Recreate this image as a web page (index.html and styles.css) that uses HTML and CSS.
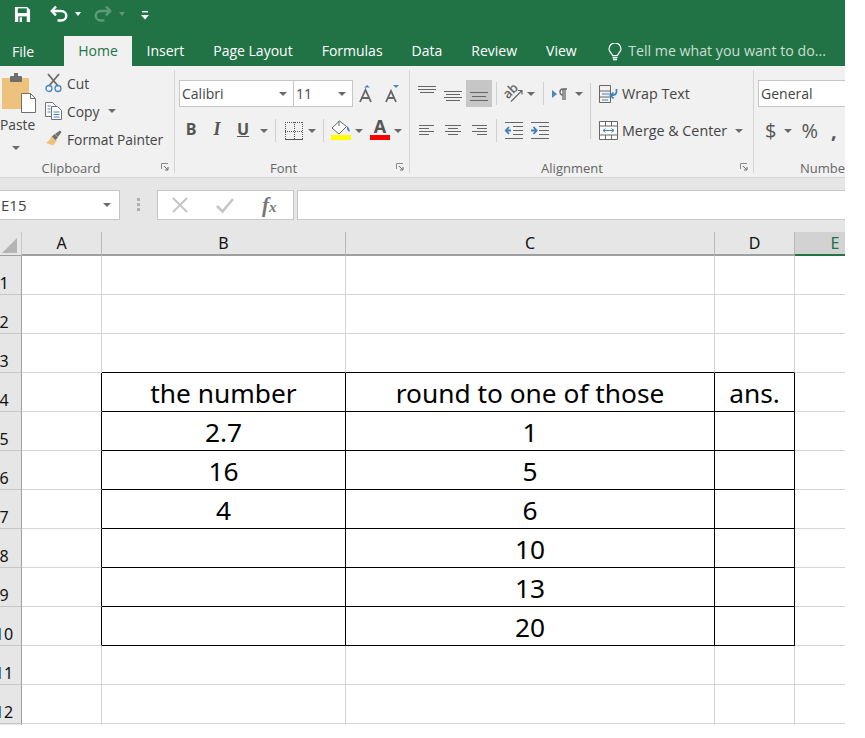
FILE: index.html
```html
<!DOCTYPE html>
<html lang="en">
<head>
<meta charset="utf-8">
<title>Excel</title>
<link rel="stylesheet" href="styles.css">
</head>
<body>
<div class="app">
  <header class="titlebar">
    <svg class="qa-save" width="17" height="17" viewBox="0 0 18 18"><path d="M1 1h13l3 3v13H1z" fill="#fff"/><rect x="4" y="2.5" width="9.500" height="5" fill="#217346"/><rect x="4.500" y="11" width="9" height="6" fill="#217346"/><rect x="6" y="12" width="2.500" height="5" fill="#fff"/></svg>
    <svg class="qa-undo" width="20" height="18" viewBox="0 0 20 18"><path d="M6 1.500 1.800 6 6 10.300" fill="none" stroke="#fff" stroke-width="2.400"/><path d="M2.500 6H11c7 0 7 9.500 0 9.500H7.500" fill="none" stroke="#fff" stroke-width="2.400"/></svg>
    <span class="qa-arrow"></span>
    <svg class="qa-redo" width="20" height="18" viewBox="0 0 20 18"><path d="M14 1.500 18.200 6 14 10.300" fill="none" stroke="#5c9a78" stroke-width="2.400"/><path d="M17.500 6H9c-7 0-7 9.500 0 9.500h3.500" fill="none" stroke="#5c9a78" stroke-width="2.400"/></svg>
    <span class="qa-arrow dim"></span>
    <svg class="qa-more" width="8" height="9" viewBox="0 0 8 9"><rect x="1" y="0" width="6" height="1.400" fill="#fff"/><path d="M0 4h8L4 8.500z" fill="#fff"/></svg>
  </header>

  <nav class="tabs">
    <span class="tab tab-file">File</span>
    <span class="tab tab-home">Home</span>
    <span class="tab">Insert</span>
    <span class="tab">Page Layout</span>
    <span class="tab">Formulas</span>
    <span class="tab">Data</span>
    <span class="tab">Review</span>
    <span class="tab">View</span>
    <span class="tell">
      <svg width="16" height="18" viewBox="0 0 16 18"><path d="M5.500 12.500C5 10 2 9 2 6a6 6 0 0 1 12 0c0 3-3 4-3.500 6.500z" fill="none" stroke="#fff" stroke-width="1.200"/><path d="M5.500 14.500h5M6 16.500h4" stroke="#fff" stroke-width="1.400"/></svg>
      <span class="tell-text">Tell me what you want to do...</span>
    </span>
  </nav>

  <section class="ribbon">
    <div class="group g-clip">
      <div class="clip-body">
        <div class="paste">
          <svg class="paste-icon" width="37" height="41" viewBox="0 0 37 41"><path d="M2 6h27v31H2z" fill="#edc27c"/><rect x="10" y="4" width="12" height="6" rx="1" fill="#6e6e6e"/><rect x="14" y="1" width="4" height="4" fill="#6e6e6e"/><path d="M21.500 21.500h9l5 5v14h-14z" fill="#fff" stroke="#6e6e6e"/><path d="M30.500 21.500v5h5" fill="none" stroke="#6e6e6e"/></svg>
          <span class="paste-label">Paste</span>
          <span class="arrow"></span>
        </div>
        <div class="clip-list">
          <div class="clip-row">
            <svg width="18" height="20" viewBox="0 0 18 20"><path d="M3 1l10 12M14 1 4 13" stroke="#6b6b6b" stroke-width="1.800" fill="none"/><circle cx="4" cy="15.500" r="3" fill="none" stroke="#4a85c0" stroke-width="1.300"/><circle cx="13" cy="15.500" r="3" fill="none" stroke="#4a85c0" stroke-width="1.300"/></svg>
            <span>Cut</span>
          </div>
          <div class="clip-row">
            <svg width="18" height="20" viewBox="0 0 18 20"><path d="M.5 1.500h7l3 3v11H.5z" fill="#fff" stroke="#707070"/><path d="M6.500 5.500h6l4 4v9h-10z" fill="#fff" stroke="#707070"/><path d="M2.500 5h3M2.500 8h3M2.500 11h3M8.500 11h6M8.500 13.500h6M8.500 16h6" stroke="#4a85c0"/></svg>
            <span>Copy</span>
            <span class="arrow copy-arrow"></span>
          </div>
          <div class="clip-row">
            <svg width="18" height="20" viewBox="0 0 18 20"><path d="M7 6.500 12 11.500 8 16.500 1 14 4.500 11z" fill="#edc27c"/><path d="M7 7.500l2.500-2.500 3.500 3.500-2.500 2.500z" fill="#6e6e6e"/><path d="M10 5l5-3.500 1.500 1.500-3.500 5z" fill="#6e6e6e"/></svg>
            <span>Format Painter</span>
          </div>
        </div>
      </div>
      <div class="group-label">Clipboard<svg class="launch" width="8" height="8" viewBox="0 0 8 8"><path d="M.5 6V.5H7" fill="none" stroke="#8a8a8a"/><path d="M3 3l4 4M7 4v3H4" fill="none" stroke="#6a6a6a"/></svg></div>
    </div>

    <div class="group g-font">
      <div class="rows">
        <div class="row r-font1">
          <div class="combo c-name"><span class="combo-text">Calibri</span><span class="arrow"></span></div>
          <div class="combo c-size"><span class="combo-text">11</span><span class="arrow"></span></div>
          <span class="btn w26"><svg width="20" height="20" viewBox="0 0 20 20"><path d="M3 18 8.500 6 14 18M5 14h7" fill="none" stroke="#666" stroke-width="1.800"/><path d="M7 3.500 10 1l3 2.500z" fill="#4a85c0"/></svg></span>
          <span class="btn w26"><svg width="20" height="20" viewBox="0 0 20 20"><path d="M3 18 8 7l5 11M4.700 14h7" fill="none" stroke="#666" stroke-width="1.800"/><path d="M10 1h6l-3 3z" fill="#4a85c0"/></svg></span>
        </div>
        <div class="row r-font2">
          <span class="btn w26 t-b">B</span>
          <span class="btn w26 t-i">I</span>
          <span class="btn w26 t-u">U</span>
          <span class="btn w16"><span class="arrow"></span></span>
          <span class="sep s-a"></span>
          <span class="btn w20"><svg width="18" height="18" viewBox="0 0 18 18"><path d="M.5 0v18M9.500 0v18M17.500 0v18M0 .5h18M0 9.500h18" fill="none" stroke="#555" stroke-dasharray="1 1"/><path d="M0 17.500h18" stroke="#555"/></svg></span>
          <span class="btn w16"><span class="arrow"></span></span>
          <span class="sep s-b"></span>
          <span class="btn w20 stacked"><svg width="20" height="15" viewBox="0 0 20 15"><path d="M8.500 1 1 8l7 6 7.500-7.500z" fill="#fff" stroke="#666"/><path d="M8 1v5" stroke="#666"/><path d="M16 6c2 2 3 4 2.500 6-2-1-3-3-2.500-6z" fill="#3f7fbf"/></svg><span class="swatch yellow"></span></span>
          <span class="btn w16"><span class="arrow"></span></span>
          <span class="btn w20 stacked col-a"><span class="t-a">A</span><span class="swatch red"></span></span>
          <span class="btn w16"><span class="arrow"></span></span>
        </div>
      </div>
      <div class="group-label">Font<svg class="launch" width="8" height="8" viewBox="0 0 8 8"><path d="M.5 6V.5H7" fill="none" stroke="#8a8a8a"/><path d="M3 3l4 4M7 4v3H4" fill="none" stroke="#6a6a6a"/></svg></div>
    </div>

    <div class="group g-align">
      <div class="rows">
        <div class="row r-al">
          <span class="btn w26"><svg width="18" height="18" viewBox="0 0 18 18"><path d="M0 1.500h18M0 4.500h18M2 7.500h14" stroke="#666"/></svg></span>
          <span class="btn w26"><svg width="18" height="18" viewBox="0 0 18 18"><path d="M0 6.500h18M2 9.500h14M0 12.500h18M2 15.500h14" stroke="#666"/></svg></span>
          <span class="btn w26 active"><svg width="18" height="18" viewBox="0 0 18 18"><path d="M0 7.500h18M2 11.500h14M0 15.500h18" stroke="#666"/></svg></span>
          <span class="sep s-c"></span>
          <span class="btn w20"><svg width="20" height="20" viewBox="0 0 20 20"><text class="ab" x="8" y="11" text-anchor="middle" transform="rotate(-45 8 7.500)">ab</text><path d="M8 17.500 18.500 7M15 6.500h4v4" fill="none" stroke="#666" stroke-width="1.200"/></svg></span>
          <span class="btn w16"><span class="arrow"></span></span>
          <span class="sep s-c"></span>
          <span class="btn w20"><svg width="20" height="14" viewBox="0 0 20 14"><path d="M2 3l5 4-5 4z" fill="#4a85c0"/><path d="M13 13V2h4M15 13V2M13 2c-4 0-4 6 0 6" fill="none" stroke="#666" stroke-width="1.300"/></svg></span>
          <span class="btn w16 a-rtl"><span class="arrow"></span></span>
          <span class="sep s-tall"></span>
          <span class="big-ico"><svg width="20" height="20" viewBox="0 0 20 20"><path d="M.5 1.500h11v17H.5zM.5 7h11M.5 13h11" fill="none" stroke="#666"/><path d="M3 10h8M3 16h6" stroke="#4a85c0"/><path d="M17.500 5v2.500c0 3-2 4-6 4M14.500 8.500l-3 3 3 3" fill="none" stroke="#3f7fbf" stroke-width="1.700"/></svg></span>
          <span class="lbl">Wrap Text</span>
        </div>
        <div class="row r-al r-al2">
          <span class="btn w26"><svg width="16" height="14" viewBox="0 0 16 14"><path d="M0 1.500h15M0 4.500h10M0 7.500h15M0 10.500h10" stroke="#666"/></svg></span>
          <span class="btn w26"><svg width="16" height="14" viewBox="0 0 16 14"><path d="M0 1.500h16M3 4.500h10M0 7.500h16M3 10.500h10" stroke="#666"/></svg></span>
          <span class="btn w26"><svg width="16" height="14" viewBox="0 0 16 14"><path d="M1 1.500h15M6 4.500h10M1 7.500h15M6 10.500h10" stroke="#666"/></svg></span>
          <span class="sep s-c s-d"></span>
          <span class="btn w26"><svg width="18" height="17" viewBox="0 0 18 17"><path d="M0 .500h18M8 4.500h10M8 8.500h10M8 12.500h10M0 16.500h18" stroke="#666"/><path d="M6 8.500H1M4 5 .8 8.500 4 12" fill="none" stroke="#3f7fbf" stroke-width="1.800"/></svg></span>
          <span class="btn w26"><svg width="18" height="17" viewBox="0 0 18 17"><path d="M0 .500h18M8 4.500h10M8 8.500h10M8 12.500h10M0 16.500h18" stroke="#666"/><path d="M0 8.500h5M2.500 5l3.200 3.500L2.500 12" fill="none" stroke="#3f7fbf" stroke-width="1.800"/></svg></span>
          <span class="big-ico merge-ico"><svg width="20" height="19" viewBox="0 0 20 19"><path d="M.5.500h18v18H.5z" fill="#fff" stroke="#666"/><path d="M.5 5h18M.5 14h18M6.500.500V5M12.500.500V5M6.500 14v4.500M12.500 14v4.500" fill="none" stroke="#666"/><path d="M4 9.500h11M6.500 7.500l-2.500 2 2.500 2M12.500 7.500l2.500 2-2.500 2" fill="none" stroke="#3f7fbf"/></svg></span>
          <span class="lbl lbl-merge">Merge &amp; Center</span>
          <span class="arrow merge-arrow"></span>
        </div>
      </div>
      <div class="group-label">Alignment<svg class="launch" width="8" height="8" viewBox="0 0 8 8"><path d="M.5 6V.5H7" fill="none" stroke="#8a8a8a"/><path d="M3 3l4 4M7 4v3H4" fill="none" stroke="#6a6a6a"/></svg></div>
    </div>

    <div class="group g-num">
      <div class="rows">
        <div class="row r-num1">
          <div class="combo c-gen"><span class="combo-text">General</span></div>
        </div>
        <div class="row r-num2">
          <span class="sym s-dollar">$</span>
          <span class="btn w16"><span class="arrow"></span></span>
          <span class="sym s-pct">%</span>
          <span class="sym s-comma">,</span>
        </div>
      </div>
      <div class="group-label label-num">Number</div>
    </div>
  </section>

  <section class="fbar">
    <div class="namebox"><span class="nb-text">E15</span><span class="arrow"></span></div>
    <div class="grip"><i></i><i></i><i></i></div>
    <div class="fx-btns">
      <svg width="18" height="18" viewBox="0 0 18 18"><path d="M2 2l14 14M16 2 2 16" stroke="#c6c6c6" stroke-width="2"/></svg>
      <svg width="18" height="18" viewBox="0 0 18 18"><path d="M1 10l5.500 5.500L17 3" fill="none" stroke="#c6c6c6" stroke-width="2.600"/></svg>
      <span class="fx"><i>f</i><i class="x">x</i></span>
    </div>
    <div class="finput"></div>
  </section>

  <section class="sheet">
    <div class="corner"><svg width="18" height="17" viewBox="0 0 18 17"><path d="M16 1v15H1z" fill="#b4b4b4"/></svg></div>
    <div class="ch">A</div><div class="ch">B</div><div class="ch">C</div><div class="ch">D</div><div class="ch ch-sel">E</div>

    <div class="rh"><span>1</span></div><div class="c"></div><div class="c"></div><div class="c"></div><div class="c"></div><div class="c"></div>
    <div class="rh"><span>2</span></div><div class="c"></div><div class="c"></div><div class="c"></div><div class="c"></div><div class="c"></div>
    <div class="rh"><span>3</span></div><div class="c"></div><div class="c tb"></div><div class="c tb"></div><div class="c tb"></div><div class="c"></div>
    <div class="rh"><span>4</span></div><div class="c tr"></div><div class="c t">the number</div><div class="c t">round to one of those</div><div class="c t">ans.</div><div class="c"></div>
    <div class="rh"><span>5</span></div><div class="c tr"></div><div class="c t">2.7</div><div class="c t">1</div><div class="c t"></div><div class="c"></div>
    <div class="rh"><span>6</span></div><div class="c tr"></div><div class="c t">16</div><div class="c t">5</div><div class="c t"></div><div class="c"></div>
    <div class="rh"><span>7</span></div><div class="c tr"></div><div class="c t">4</div><div class="c t">6</div><div class="c t"></div><div class="c"></div>
    <div class="rh"><span>8</span></div><div class="c tr"></div><div class="c t"></div><div class="c t">10</div><div class="c t"></div><div class="c"></div>
    <div class="rh"><span>9</span></div><div class="c tr"></div><div class="c t"></div><div class="c t">13</div><div class="c t"></div><div class="c"></div>
    <div class="rh"><span>10</span></div><div class="c tr"></div><div class="c t"></div><div class="c t">20</div><div class="c t"></div><div class="c"></div>
    <div class="rh"><span>11</span></div><div class="c"></div><div class="c"></div><div class="c"></div><div class="c"></div><div class="c"></div>
    <div class="rh"><span>12</span></div><div class="c"></div><div class="c"></div><div class="c"></div><div class="c"></div><div class="c"></div>
    <div class="rh"></div><div class="c"></div><div class="c"></div><div class="c"></div><div class="c"></div><div class="c"></div>
  </section>
</div>
</body>
</html>
```
FILE: styles.css
```css
* { box-sizing: border-box; }
html, body { margin: 0; background: #fff; }
body { font-family: "Open Sans", "Noto Sans", sans-serif; color: #444; }
.app { width: 845px; height: 725px; overflow: hidden; display: flex; flex-direction: column; }

/* title bar */
.titlebar { height: 36px; background: #217346; display: flex; align-items: flex-start; padding: 6px 0 0 14px; flex: none; }
.qa-undo { margin-left: 19px; margin-top: -1px; }
.qa-arrow { width: 0; height: 0; border: 3.500px solid transparent; border-top: 4px solid #fff; border-bottom: 0; margin: 6px 0 0 5px; }
.qa-arrow.dim { border-top-color: #5c9a78; margin-left: 7px; }
.qa-redo { margin-left: 11px; margin-top: -1px; }
.qa-more { margin: 5px 0 0 16px; }

/* tabs */
.tabs { height: 30px; background: #217346; display: flex; flex: none; color: #fff; font-size: 14px; }
.tab { padding: 4px 14.500px 0; line-height: 22px; }
.tab-file { padding: 5px 0 0 12px; width: 64px; }
.tab-home { background: #f1f1f1; color: #217346; width: 68px; padding: 4px 0 0; text-align: center; }
.tell { display: flex; align-items: flex-start; margin-left: 16px; color: #c9dfd2; padding-top: 4px; }
.tell svg { margin-top: 3px; }
.tell-text { margin-left: 5px; line-height: 22px; font-size: 14.200px; }

/* ribbon */
.ribbon { height: 112px; flex: none; background: #f1f1f1; border-bottom: 1px solid #d6d6d6; display: flex; overflow: hidden; font-size: 13.800px; }
.group { display: flex; flex-direction: column; position: relative; flex: none; }
.group::after { content: ""; position: absolute; right: 0; top: 4px; bottom: 4px; width: 1px; background: #d4d4d4; }
.g-clip { width: 175px; }
.g-font { width: 235px; }
.g-align { width: 344px; }
.g-num { flex: 1; }
.g-num::after { display: none; }
.group-label { height: 20px; font-size: 13px; line-height: 18px; color: #666; text-align: center; margin-top: auto; position: relative; flex: none; margin-bottom: -2px; }
.g-clip .group-label { padding-right: 33px; }
.g-font .group-label { padding-right: 18px; }
.g-align .group-label { padding-right: 20px; }
.launch { position: absolute; right: 6px; top: 4px; }
.label-num { text-align: left; padding-left: 46px; white-space: nowrap; }

.arrow { display: inline-block; width: 0; height: 0; border: 4px solid transparent; border-top: 4px solid #6a6a6a; border-bottom: 0; flex: none; }

.clip-body { display: flex; flex: 1; min-height: 0; }
.paste { width: 37px; display: flex; flex-direction: column; align-items: flex-start; padding-top: 6px; flex: none; }
.paste-icon { flex: none; }
.paste-label { margin: 2px 0 0 0; width: 33px; text-align: center; line-height: 20px; }
.paste .arrow { margin: 11px 0 0 12px; }
.clip-list { margin: 3px 0 0 8px; }
.clip-row { height: 28px; display: flex; align-items: center; white-space: nowrap; }
.clip-row span { margin-left: 4px; }
.clip-row .copy-arrow { margin-left: 9px; }

.rows { padding-top: 14px; display: flex; flex-direction: column; gap: 10px; flex: 1; }
.row { display: flex; align-items: center; height: 27px; flex: none; }
.btn { display: flex; align-items: center; justify-content: center; height: 26px; flex: none; }
.btn svg { overflow: visible; }
.w26 { width: 26px; }
.w20 { width: 20px; }
.w16 { width: 16px; }
.sep { width: 1px; height: 23px; background: #d0d0d0; flex: none; }

.r-font1 { padding-left: 4px; }
.combo { height: 27px; background: #fff; border: 1px solid #c6c6c6; display: flex; align-items: center; padding: 0 6px 0 2px; justify-content: space-between; flex: none; }
.c-name { width: 115px; }
.c-size { width: 60px; margin-left: -1px; margin-right: 1px; }
.combo-text { color: #444; font-size: 14px; }
.r-font2 { padding-left: 3px; }
.t-b, .t-i, .t-u { font-weight: 700; font-size: 16px; color: #555; padding-bottom: 3px; }
.t-i { font-style: italic; font-family: "Liberation Serif", serif; font-size: 18px; }
.t-u { text-decoration: underline; }
.s-a { margin: 0 8px 0 3px; }
.s-b { margin: 0 7px 0 3px; }
.stacked { flex-direction: column; justify-content: flex-end; height: 23px; align-self: flex-start; }
.swatch { width: 20px; height: 5px; flex: none; }
.yellow { background: #ffff00; }
.red { background: #ff0000; }
.col-a { margin-left: 3px; }
.t-a { font-weight: 700; font-size: 18px; line-height: 17px; color: #555; }

.r-al { padding-left: 4px; }
.active { background: #c6c6c6; height: 27px; }
.s-c { margin: 0 6px 0 4px; }
.s-tall { margin: 3px 8px 0 3px; height: 56px; align-self: flex-start; }
.a-rtl { margin-left: 1px; }
.big-ico { width: 20px; display: flex; flex: none; }
.lbl { margin-left: 3px; white-space: nowrap; font-size: 14.300px; }
.ab { font-size: 13px; fill: #666; font-weight: 600; }
.s-d { margin-right: 4px; }
.merge-ico { margin-left: 46px; }
.merge-arrow { margin-left: 8px; }

.r-num1 { padding-left: 4px; }
.c-gen { width: 120px; }
.r-num2 { padding-left: 11px; }
.sym { font-size: 20px; color: #555; flex: none; }
.s-dollar { margin-right: 4px; }
.s-pct { margin-left: 5px; }
.s-comma { margin-left: 13px; font-weight: 700; }

/* formula bar */
.fbar { height: 54px; flex: none; background: #e6e6e6; display: flex; align-items: flex-start; padding-top: 12px; }
.namebox { width: 120px; height: 30px; background: #fff; border: 1px solid #c6c6c6; border-left: 0; display: flex; align-items: center; justify-content: space-between; padding: 0 8px 0 1px; font-size: 15px; flex: none; }
.nb-text { color: #444; }
.grip { width: 37px; display: flex; flex-direction: column; align-items: center; gap: 2px; padding-top: 8px; flex: none; }
.grip i { width: 3px; height: 3px; background: #b0b0b0; display: block; }
.fx-btns { width: 137px; height: 30px; background: #fff; border: 1px solid #c6c6c6; display: flex; align-items: center; flex: none; padding-left: 13px; gap: 27px; }
.fx { font-family: "Liberation Serif", serif; font-size: 21px; color: #777; font-weight: 700; line-height: 1; margin-left: 1px; }
.fx .x { font-size: 15px; }
.finput { flex: 1; height: 30px; margin-left: 3px; background: #fff; border: 1px solid #c6c6c6; border-right: 0; }

/* sheet */
.sheet { flex: 1; min-height: 0; display: grid; grid-template-columns: 22px 80px 244px 369px 80px 80px; grid-template-rows: 24px repeat(13, 39px); overflow: hidden; color: #000; }
.corner { background: #e6e6e6; border-right: 1px solid #c6c6c6; border-bottom: 1px solid #9f9f9f; display: flex; align-items: flex-end; justify-content: flex-end; padding: 0 2px 1px 0; }
.ch { background: #e6e6e6; border-right: 1px solid #b8b8b8; border-bottom: 2px solid #9f9f9f; font-size: 16px; font-family: "Noto Sans", sans-serif; display: flex; align-items: center; justify-content: center; color: #111; padding-bottom: 1px; }
.ch-sel { background: #d2d2d2; border-right: 0; border-bottom: 2px solid #217346; color: #217346; }
.rh { background: #e6e6e6; border-right: 1px solid #9f9f9f; border-bottom: 1px solid #c6c6c6; display: flex; align-items: flex-end; justify-content: center; padding-right: 13px; font-size: 16px; font-family: "Noto Sans", sans-serif; color: #111; line-height: 22px; white-space: nowrap; }
.c { border-right: 1px solid #d4d4d4; border-bottom: 1px solid #d4d4d4; font-size: 26.300px; font-family: "Noto Sans", sans-serif; display: flex; align-items: flex-end; justify-content: center; line-height: 36px; white-space: nowrap; }
.tb { border-bottom-color: #000; }
.tr { border-right-color: #000; }
.t { border-right-color: #000; border-bottom-color: #000; }
```
